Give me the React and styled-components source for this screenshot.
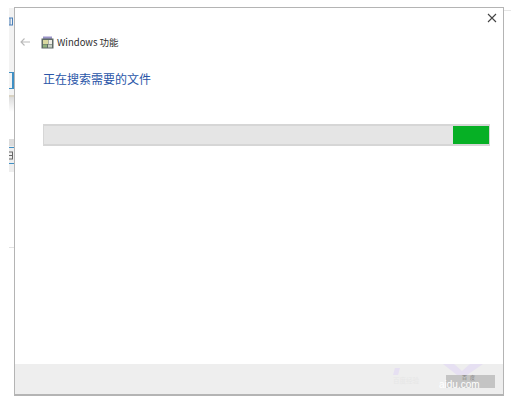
import React from "react";
import styled, { createGlobalStyle } from "styled-components";

const GlobalStyle = createGlobalStyle`
  html, body {
    margin: 0;
    padding: 0;
    background: #fff;
    overflow: hidden;
  }
`;

const Page = styled.div`
  width: 511px;
  height: 402px;
  display: flex;
  padding: 7px 0 0 9px;
  box-sizing: border-box;
  font-family: "Noto Sans CJK SC", "Liberation Sans", sans-serif;
`;

const BackStrip = styled.div`
  flex: none;
  width: ${(p) => p.$w}px;
  height: 389px;
  display: flex;
  flex-direction: column;
  overflow: hidden;
`;

const Sliver = styled.div`
  flex: none;
  height: ${(p) => p.$h}px;
  background: ${(p) => p.$bg || "transparent"};
  box-sizing: border-box;
  overflow: hidden;
  ${(p) => p.$edge && `border-right: 2px solid ${p.$edge};`}
  ${(p) => p.$lines && `border-top: 1px solid ${p.$lines}; border-bottom: 1px solid ${p.$lines};`}
`;

const Fragment = styled.svg`
  display: block;
  width: 5px;
  height: 9px;
  margin-top: ${(p) => p.$top || 0}px;
`;

const Window = styled.div`
  position: relative;
  flex: none;
  width: 490px;
  height: 389px;
  box-sizing: border-box;
  border: 1px solid #b4b4b4;
  border-bottom-width: 2px;
  background: #fff;
  display: flex;
  flex-direction: column;
`;

const CloseBtn = styled.button`
  position: absolute;
  top: 4px;
  right: 5px;
  width: 12px;
  height: 12px;
  padding: 0;
  border: 0;
  background: none;
  display: flex;
`;

const Main = styled.div`
  flex: 1;
  padding: 26px 13px 0 28px;
`;

const Crumb = styled.div`
  display: flex;
  align-items: center;
  height: 16px;
  margin-left: -24px;
`;

const Back = styled.svg`
  width: 12px;
  height: 10px;
  margin-right: 10px;
`;

const AppIcon = styled.svg`
  width: 13px;
  height: 13px;
  margin-right: 3px;
`;

const CrumbText = styled.span`
  font-size: 9.5px;
  line-height: 16px;
  color: #303030;
`;

const Heading = styled.h1`
  margin: 20px 0 0;
  font-size: 12px;
  line-height: 18px;
  font-weight: 400;
  color: #2a56a8;
`;

const Bar = styled.div`
  margin-top: 36px;
  height: 22px;
  box-sizing: border-box;
  background: #e5e5e5;
  border: 1px solid #d6d6d6;
  border-top-width: 2px;
  border-bottom-width: 2px;
  display: flex;
  justify-content: flex-end;
`;

const Fill = styled.div`
  width: 36px;
  background: #06b025;
`;

const Footer = styled.div`
  position: relative;
  height: 30px;
  background: #eeeeee;
  overflow: hidden;
`;

const MarkShape = styled.svg`
  position: absolute;
  left: 377px;
  top: 0;
  width: 111px;
  height: 30px;
`;

const FaintText = styled.span`
  position: absolute;
  left: 378px;
  top: 12px;
  font-size: 6.5px;
  line-height: 9px;
  color: #e6e6e6;
`;

const Stamp = styled.div`
  position: absolute;
  left: 431px;
  top: 11px;
  width: 49px;
  height: 13px;
  background: #c4c4c4;
`;

const StampLogo = styled.span`
  position: absolute;
  left: 15px;
  top: -1px;
  width: 18px;
  font-size: 5px;
  line-height: 5px;
  text-align: center;
  letter-spacing: 3px;
  color: #808080;
`;

const StampText = styled.span`
  position: absolute;
  left: 424px;
  top: 17px;
  font-size: 10px;
  line-height: 8px;
  color: #fff;
  font-family: "Liberation Sans", sans-serif;
`;

export default function App() {
  return (
    <>
      <GlobalStyle />
      <Page>
        <BackStrip $w={5}>
          <Sliver $h={1} $bg="#fff" />
          <Sliver $h={9} $bg="#f2f2f2" />
          <Sliver $h={9} $bg="#f2f2f2">
            <Fragment viewBox="0 0 5 9">
              <path d="M0 1 H4 M0 8 H4 M1 1 V8 M3.5 1 V8" stroke="#4a7fb8" strokeWidth="1" fill="none" />
            </Fragment>
          </Sliver>
          <Sliver $h={46} $bg="#f3f3f3" />
          <Sliver $h={17} $bg="#f3f3f3" $edge="#3f8fc4" $lines="#3f8fc4" />
          <Sliver $h={6} $bg="#f3f3f3" />
          <Sliver $h={2} $bg="#d8d2c2" />
          <Sliver $h={15} $bg="linear-gradient(#dcdcdc, #fff)" />
          <Sliver $h={27} $bg="#fff" />
          <Sliver $h={7} $bg="#dcdcdc" />
          <Sliver $h={1} $bg="#eeeeee" />
          <Sliver $h={17} $bg="#eeeeee" $lines="#3f8fc4">
            <Fragment viewBox="0 0 5 9" $top={3}>
              <path d="M0 1 H4 M0 4.5 H4 M0 8 H4 M3.5 1 V8" stroke="#666" strokeWidth="1" fill="none" />
            </Fragment>
          </Sliver>
          <Sliver $h={8} $bg="#eeeeee" />
          <Sliver $h={75} $bg="#fff" />
          <Sliver $h={1} $bg="#e2e2e2" />
        </BackStrip>
        <Window>
          <CloseBtn aria-label="关闭">
            <svg width="12" height="12" viewBox="0 0 12 12">
              <path d="M2 2 L10 10 M10 2 L2 10" stroke="#444" strokeWidth="1.1" fill="none" />
            </svg>
          </CloseBtn>
          <Main>
            <Crumb>
              <Back viewBox="0 0 12 10">
                <path d="M11 5 H2 M5.5 1.5 L2 5 L5.5 8.5" stroke="#b9b9b9" strokeWidth="1.1" fill="none" />
              </Back>
              <AppIcon viewBox="0 0 13 13">
                <rect x="2" y="0.5" width="9" height="2.5" fill="#9a94c8" />
                <rect x="0.5" y="2.5" width="12" height="10" fill="#5f6a66" />
                <rect x="2" y="4" width="5" height="4" fill="#d9d8a0" />
                <rect x="7.5" y="4" width="3.5" height="4" fill="#f0efe6" />
                <rect x="2" y="8.5" width="4" height="3" fill="#8fb07a" />
                <rect x="7" y="8.5" width="4" height="3" fill="#c8cfc4" />
              </AppIcon>
              <CrumbText>Windows 功能</CrumbText>
            </Crumb>
            <Heading>正在搜索需要的文件</Heading>
            <Bar>
              <Fill />
            </Bar>
          </Main>
          <Footer>
            <MarkShape viewBox="0 0 111 30">
              <path d="M3 4 H8 L6 11 H1 Z" fill="#e6e0f2" />
              <path d="M51 0 H62 L70 7 L78 0 H91 L75 11 H65 Z" fill="#e6e0f2" />
            </MarkShape>
            <FaintText>百度经验</FaintText>
            <Stamp>
              <StampLogo>百度</StampLogo>
            </Stamp>
            <StampText>aidu.com</StampText>
          </Footer>
        </Window>
        <BackStrip $w={8}>
          <Sliver $h={3} />
          <Sliver $h={1} $bg="#e6e6e6" />
        </BackStrip>
      </Page>
    </>
  );
}
